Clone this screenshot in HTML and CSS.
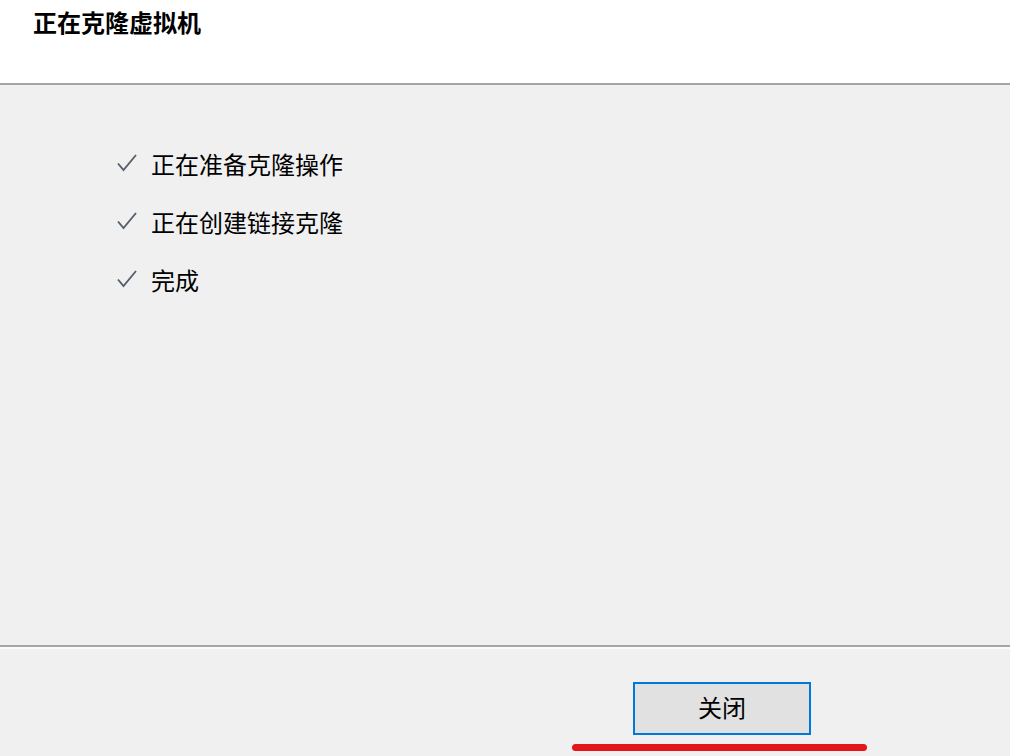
FILE: index.html
```html
<!DOCTYPE html>
<html lang="zh">
<head>
<meta charset="utf-8">
<link rel="stylesheet" href="styles.css">
</head>
<body>
<div class="dialog">
  <header class="header">
    <h1 class="title">正在克隆虚拟机</h1>
  </header>
  <main class="content">
    <ul class="steps">
      <li class="step">
        <svg class="check" viewBox="0 0 20 18" width="20" height="18"><path d="M1 9.5 L6.5 16 L19 1" fill="none" stroke="#56606a" stroke-width="1.9"/></svg>
        <span>正在准备克隆操作</span>
      </li>
      <li class="step">
        <svg class="check" viewBox="0 0 20 18" width="20" height="18"><path d="M1 9.5 L6.5 16 L19 1" fill="none" stroke="#56606a" stroke-width="1.9"/></svg>
        <span>正在创建链接克隆</span>
      </li>
      <li class="step">
        <svg class="check" viewBox="0 0 20 18" width="20" height="18"><path d="M1 9.5 L6.5 16 L19 1" fill="none" stroke="#56606a" stroke-width="1.9"/></svg>
        <span>完成</span>
      </li>
    </ul>
  </main>
  <footer class="footer">
    <button class="btn">关闭</button>
    <div class="annot"></div>
  </footer>
</div>
</body>
</html>
```

FILE: styles.css
```css
html, body {
  margin: 0;
  padding: 0;
}
body {
  width: 1010px;
  height: 756px;
  overflow: hidden;
  background: #f0f0f0;
  font-family: "Noto Sans CJK SC", "Noto Sans", sans-serif;
  color: #000;
}
.dialog {
  display: flex;
  flex-direction: column;
  height: 756px;
}
.header {
  height: 83px;
  background: #fff;
  border-bottom: 2px solid #a5a5a5;
  padding-left: 33px;
  box-sizing: content-box;
}
.title {
  margin: 0;
  padding-top: 7px;
  font-size: 24px;
  line-height: 30px;
  font-weight: 700;
}
.content {
  height: 560px;
  padding-left: 117px;
  padding-top: 61px;
  box-sizing: border-box;
}
.steps {
  list-style: none;
  margin: 0;
  padding: 0;
  display: flex;
  flex-direction: column;
  gap: 24px;
}
.step {
  display: flex;
  align-items: center;
  height: 34px;
  font-size: 24px;
  gap: 14px;
}
.check {
  display: block;
  flex: none;
}
.footer {
  position: relative;
  flex: 1;
  border-top: 2px solid #a5a5a5;
  box-shadow: inset 0 2px 0 #fbfbfb;
  display: flex;
  justify-content: flex-start;
  padding-left: 633px;
  padding-top: 35px;
}
.btn {
  width: 178px;
  height: 53px;
  box-sizing: border-box;
  border: 2px solid #0078d7;
  background: #e1e1e1;
  font-family: "Noto Sans CJK SC", "Noto Sans", sans-serif;
  font-size: 24px;
  line-height: 1;
  color: #000;
  padding: 0 0 4px 0;
  margin: 0;
}
.annot {
  position: absolute;
  left: 572px;
  top: 97px;
  width: 295px;
  height: 7px;
  border-radius: 4px;
  background: #e2171b;
}
```
